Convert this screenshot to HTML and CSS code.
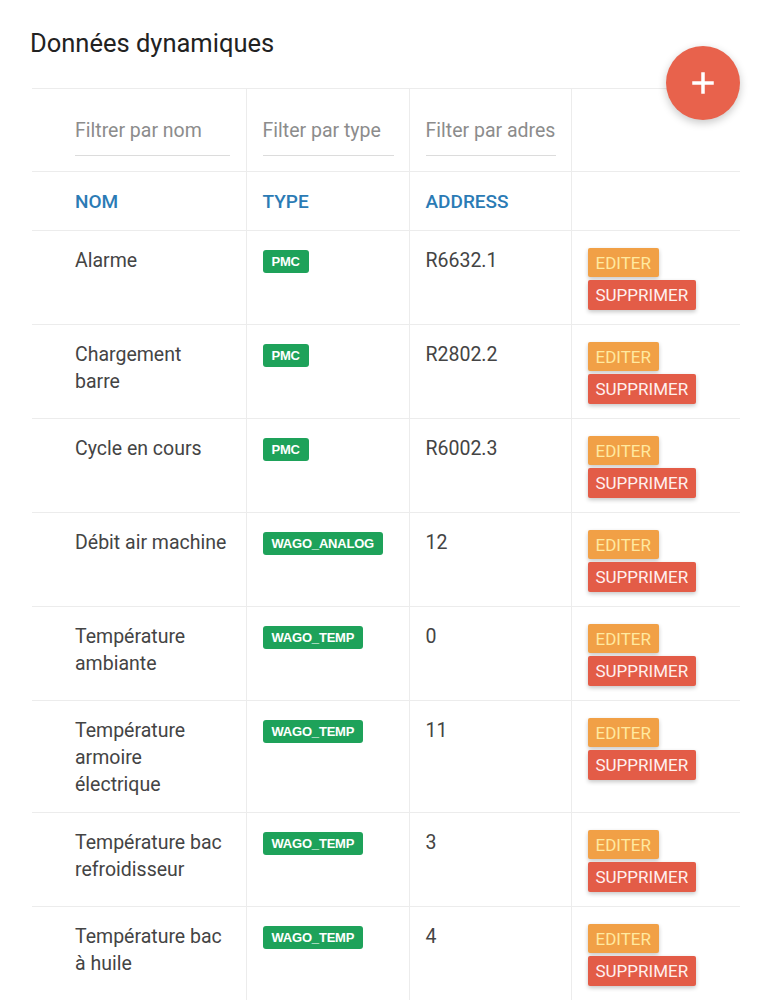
FILE: index.html
```html
<!DOCTYPE html>
<html lang="fr">
<head>
    <meta charset="UTF-8">
    <meta name="viewport" content="width=device-width, initial-scale=1.0">
    <title>Données dynamiques</title>
    <link rel="stylesheet" href="styles.css">
</head>
<body>
    <div class="panel">
        <h2 class="panel-title">Données dynamiques</h2>
        <button class="fab" title="Ajouter">
            <svg width="22" height="22" viewBox="0 0 22 22">
                <path d="M11 2v18M2 11h18" stroke="#fff" stroke-width="3.5" stroke-linecap="square"/>
            </svg>
        </button>

        <table class="data-table">
            <colgroup>
                <col class="col-name">
                <col class="col-type">
                <col class="col-address">
                <col class="col-actions">
            </colgroup>
            <thead>
                <tr class="filter-row">
                    <td><input type="text" class="filter filter-name" placeholder="Filtrer par nom"></td>
                    <td><input type="text" class="filter filter-type" placeholder="Filter par type"></td>
                    <td><input type="text" class="filter filter-address" placeholder="Filter par adresse"></td>
                    <td></td>
                </tr>
                <tr class="header-row">
                    <th>NOM</th>
                    <th>TYPE</th>
                    <th>ADDRESS</th>
                    <th></th>
                </tr>
            </thead>
            <tbody>
                <tr>
                    <td>Alarme</td>
                    <td><span class="badge">PMC</span></td>
                    <td>R6632.1</td>
                    <td><button class="btn btn-edit">Editer</button><button class="btn btn-delete">Supprimer</button></td>
                </tr>
                <tr>
                    <td>Chargement barre</td>
                    <td><span class="badge">PMC</span></td>
                    <td>R2802.2</td>
                    <td><button class="btn btn-edit">Editer</button><button class="btn btn-delete">Supprimer</button></td>
                </tr>
                <tr>
                    <td>Cycle en cours</td>
                    <td><span class="badge">PMC</span></td>
                    <td>R6002.3</td>
                    <td><button class="btn btn-edit">Editer</button><button class="btn btn-delete">Supprimer</button></td>
                </tr>
                <tr>
                    <td>Débit air machine</td>
                    <td><span class="badge">WAGO_ANALOG</span></td>
                    <td>12</td>
                    <td><button class="btn btn-edit">Editer</button><button class="btn btn-delete">Supprimer</button></td>
                </tr>
                <tr>
                    <td>Température ambiante</td>
                    <td><span class="badge">WAGO_TEMP</span></td>
                    <td>0</td>
                    <td><button class="btn btn-edit">Editer</button><button class="btn btn-delete">Supprimer</button></td>
                </tr>
                <tr>
                    <td>Température armoire électrique</td>
                    <td><span class="badge">WAGO_TEMP</span></td>
                    <td>11</td>
                    <td><button class="btn btn-edit">Editer</button><button class="btn btn-delete">Supprimer</button></td>
                </tr>
                <tr>
                    <td>Température bac refroidisseur</td>
                    <td><span class="badge">WAGO_TEMP</span></td>
                    <td>3</td>
                    <td><button class="btn btn-edit">Editer</button><button class="btn btn-delete">Supprimer</button></td>
                </tr>
                <tr>
                    <td>Température bac à huile</td>
                    <td><span class="badge">WAGO_TEMP</span></td>
                    <td>4</td>
                    <td><button class="btn btn-edit">Editer</button><button class="btn btn-delete">Supprimer</button></td>
                </tr>
            </tbody>
        </table>
    </div>
</body>
</html>
```

FILE: styles.css
```css
body {
    margin: 0;
    background: #fff;
    font-family: Roboto, "Liberation Sans", Arial, sans-serif;
    color: #444;
}

.panel {
    position: relative;
    padding: 28px 25px 0 32px;
}

.panel-title {
    margin: 0 0 30px -2px;
    font-size: 25.5px;
    font-weight: 400;
    line-height: 30px;
    color: #222;
}

/* Floating add button */
.fab {
    position: absolute;
    top: 46px;
    left: 666px;
    width: 74px;
    height: 74px;
    border: none;
    border-radius: 50%;
    background: #e8624c;
    box-shadow: 0 3px 8px rgba(0,0,0,0.22);
    display: flex;
    align-items: center;
    justify-content: center;
    padding: 0;
    cursor: pointer;
}

.data-table {
    width: 708px;
    table-layout: fixed;
    border-collapse: collapse;
}
.col-name { width: 214px; }
.col-type { width: 163px; }
.col-address { width: 162px; }
.col-actions { width: 169px; }

.data-table tr {
    border-top: 1px solid #ececec;
}
.data-table td, .data-table th {
    border-left: 1px solid #ececec;
    padding: 16px 16px 14px 16px;
    vertical-align: top;
    text-align: left;
    font-size: 19.5px;
    line-height: 27px;
}
.data-table td:first-child, .data-table th:first-child {
    border-left: none;
    padding-left: 43px;
    padding-right: 18px;
}

/* Filter inputs */
.filter-row td {
    height: 83px;
    padding-top: 0;
    padding-bottom: 15px;
    vertical-align: bottom;
    box-sizing: border-box;
}
.filter {
    display: block;
    box-sizing: border-box;
    height: 38px;
    padding: 0 0 12px 0;
    border: none;
    border-bottom: 1px solid #dcdcdc;
    font-family: inherit;
    font-size: 19.5px;
    line-height: 26px;
    color: #444;
    outline: none;
    background: transparent;
}
.filter::placeholder {
    color: #8c8c8c;
}
.filter-name { width: 155px; }
.filter-type { width: 131px; }
.filter-address { width: 130px; }

.header-row th {
    height: 59px;
    padding-top: 0;
    padding-bottom: 0;
    vertical-align: middle;
    box-sizing: border-box;
    font-size: 19px;
    font-weight: 500;
    color: #2b7bb5;
}

/* Type badge */
.badge {
    display: inline-block;
    margin-top: 3px;
    padding: 0 9px;
    height: 23px;
    line-height: 23px;
    border-radius: 3px;
    background: #1ea25a;
    color: #fff;
    font-family: "Liberation Sans", Arial, sans-serif;
    font-size: 13px;
    font-weight: 700;
    letter-spacing: -0.2px;
    vertical-align: top;
}

/* Row action buttons */
.btn {
    display: block;
    border: none;
    border-radius: 2px;
    padding: 0 8px;
    height: 29px;
    font-family: inherit;
    font-size: 17px;
    text-transform: uppercase;
    box-shadow: 0 2px 4px rgba(0,0,0,0.22);
    cursor: pointer;
}
.btn-edit {
    margin-top: 1px;
    background: #f1a046;
    color: #ffe9a0;
}
.btn-delete {
    margin-top: 3px;
    height: 30px;
    background: #e35c47;
    color: #fff0ee;
}
```
